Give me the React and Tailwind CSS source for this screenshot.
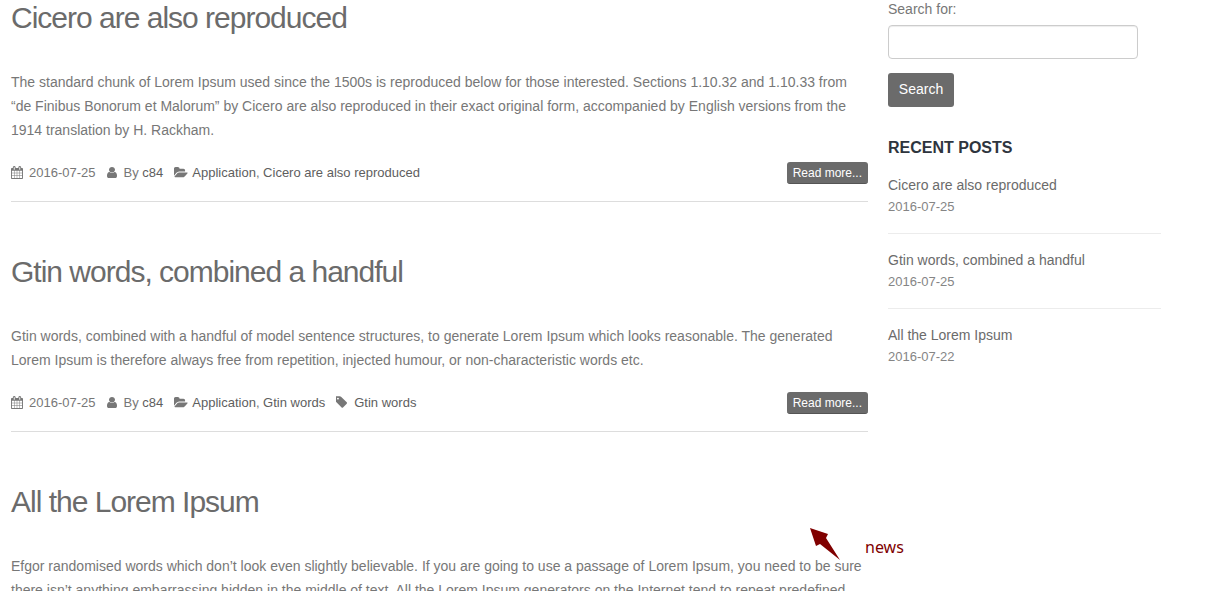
import React from 'react';

const POSTS = [
  {
    title: 'Cicero are also reproduced',
    excerpt:
      'The standard chunk of Lorem Ipsum used since the 1500s is reproduced below for those interested. Sections 1.10.32 and 1.10.33 from “de Finibus Bonorum et Malorum” by Cicero are also reproduced in their exact original form, accompanied by English versions from the 1914 translation by H. Rackham.',
    date: '2016-07-25',
    author: 'c84',
    categories: ['Application', 'Cicero are also reproduced'],
    tags: [],
  },
  {
    title: 'Gtin words, combined a handful',
    excerpt:
      'Gtin words, combined with a handful of model sentence structures, to generate Lorem Ipsum which looks reasonable. The generated Lorem Ipsum is therefore always free from repetition, injected humour, or non-characteristic words etc.',
    date: '2016-07-25',
    author: 'c84',
    categories: ['Application', 'Gtin words'],
    tags: ['Gtin words'],
  },
  {
    title: 'All the Lorem Ipsum',
    excerpt:
      'Efgor randomised words which don’t look even slightly believable. If you are going to use a passage of Lorem Ipsum, you need to be sure there isn’t anything embarrassing hidden in the middle of text. All the Lorem Ipsum generators on the Internet tend to repeat predefined',
    date: '2016-07-22',
    author: 'c84',
    categories: ['Application'],
    tags: [],
  },
];

function CalendarIcon() {
  return (
    <svg viewBox="64 0 1664 1792" className="w-3 h-[13px] mb-[2px] shrink-0" fill="currentColor" aria-hidden="true">
      <path d="M192 1664h288v-288h-288v288zM544 1664h320v-288h-320v288zM192 1312h288v-320h-288v320zM544 1312h320v-320h-320v320zM192 928h288v-288h-288v288zM928 1664h320v-288h-320v288zM544 928h320v-288h-320v288zM1312 1664h288v-288h-288v288zM928 1312h320v-320h-320v320zM576 480v-288q0-13-9.5-22.5t-22.5-9.5h-64q-13 0-22.5 9.5t-9.5 22.5v288q0 13 9.5 22.5t22.5 9.5h64q13 0 22.5-9.5t9.5-22.5zM1312 1312h288v-320h-288v320zM928 928h320v-288h-320v288zM1312 928h288v-288h-288v288zM1344 480v-288q0-13-9.5-22.5t-22.5-9.5h-64q-13 0-22.5 9.5t-9.5 22.5v288q0 13 9.5 22.5t22.5 9.5h64q13 0 22.5-9.5t9.5-22.5zM1728 384v1280q0 52-38 90t-90 38h-1408q-52 0-90-38t-38-90v-1280q0-52 38-90t90-38h128v-96q0-66 47-113t113-47h64q66 0 113 47t47 113v96h384v-96q0-66 47-113t113-47h64q66 0 113 47t47 113v96h128q52 0 90 38t38 90z" />
    </svg>
  );
}

function UserIcon() {
  return (
    <svg viewBox="256 128 1280 1536" preserveAspectRatio="none" className="w-[10px] h-[11px] mb-[2px] shrink-0" fill="currentColor" aria-hidden="true">
      <path d="M1536 1399q0 109-62.5 187t-150.5 78h-854q-88 0-150.5-78t-62.5-187q0-85 8.5-160.5t31.5-152 58.5-131 94-89 134.5-34.5q131 128 313 128t313-128q76 0 134.5 34.5t94 89 58.5 131 31.5 152 8.5 160.5zm-256-887q0 159-112.5 271.5t-271.5 112.5-271.5-112.5-112.5-271.5 112.5-271.5 271.5-112.5 271.5 112.5 112.5 271.5z" />
    </svg>
  );
}

function FolderIcon() {
  return (
    <svg viewBox="0 0 1815 1792" className="w-[14px] h-[13px] mb-[2px] shrink-0" fill="currentColor" aria-hidden="true">
      <path d="M1815 952q0 31-31 66l-336 396q-43 51-120.5 86.5t-143.5 35.5h-1088q-34 0-60.5-13t-26.5-43q0-31 31-66l336-396q43-51 120.5-86.5t143.5-35.5h1088q34 0 60.5 13t26.5 43zm-343-344v160h-832q-94 0-197 47.5t-164 119.5l-337 396-5 6q0-4-.5-12.5t-.5-12.5v-960q0-92 66-158t158-66h320q92 0 158 66t66 158v32h544q92 0 158 66t66 158z" />
    </svg>
  );
}

function TagIcon() {
  return (
    <svg viewBox="192 128 1451 1664" className="w-[11px] h-[13px] mb-[2px] shrink-0" fill="currentColor" aria-hidden="true">
      <path d="M576 448q0-53-37.5-90.5t-90.5-37.5-90.5 37.5-37.5 90.5 37.5 90.5 90.5 37.5 90.5-37.5 37.5-90.5zm1067 576q0 53-37 90l-491 492q-39 37-91 37-53 0-90-37l-715-716q-38-37-64.5-101t-26.5-117v-416q0-52 38-90t90-38h416q53 0 117 26.5t102 64.5l715 714q37 39 37 91z" />
    </svg>
  );
}

function LinkList({ items }) {
  return (
    <span>
      {items.map((item, i) => (
        <React.Fragment key={item}>
          {i > 0 && ', '}
          <a href="#" className="text-[#5e5e5e]">{item}</a>
        </React.Fragment>
      ))}
    </span>
  );
}

function Post({ post }) {
  return (
    <article className="border-b border-[#dddddd] pb-[17px] mb-[52px]">
      <h2 className="text-[30px] leading-9 tracking-[-1px] mb-[34px] text-[#6b6b6b]">
        <a href="#">{post.title}</a>
      </h2>
      <p className="text-sm leading-6 mb-5">{post.excerpt}</p>
      <div className="flex items-center justify-between text-[13px] leading-5">
        <div className="flex items-center gap-[11px]">
          <span className="flex items-center gap-[6px]"><CalendarIcon /> {post.date}</span>
          <span className="flex items-center gap-[7px]">
            <UserIcon />
            <span>By <a href="#" className="text-[#5e5e5e]">{post.author}</a></span>
          </span>
          <span className="flex items-center gap-1"><FolderIcon /> <LinkList items={post.categories} /></span>
          {post.tags.length > 0 && (
            <span className="flex items-center gap-[7px]"><TagIcon /> <LinkList items={post.tags} /></span>
          )}
        </div>
        <a
          href="#"
          className="h-[22px] px-[6px] rounded-[3px] bg-[#6b6b6b] border-b border-[#555555] text-white text-xs leading-[22px]"
        >
          Read more...
        </a>
      </div>
    </article>
  );
}

function Sidebar() {
  return (
    <aside className="w-[273px] shrink-0">
      <form onSubmit={(e) => e.preventDefault()}>
        <label htmlFor="search" className="block text-sm leading-[18px] mb-[7px]">Search for:</label>
        <input
          id="search"
          type="text"
          className="block w-[250px] h-[34px] px-3 border border-[#cccccc] rounded-[4px] shadow-[inset_0_1px_1px_rgba(0,0,0,0.075)] text-sm outline-none"
        />
        <button
          type="submit"
          className="block mt-[14px] h-[34px] w-[66px] pb-[2px] rounded-[3px] bg-[#6b6b6b] text-white text-sm"
        >
          Search
        </button>
      </form>

      <h3 className="mt-[29px] mb-[15px] text-base leading-6 font-bold uppercase text-[#2e353e]">Recent Posts</h3>
      <ul className="text-sm leading-[21px]">
        {POSTS.map((post) => (
          <li key={post.title} className="pb-4 mb-4 border-b border-[#ececec] last:border-b-0">
            <a href="#" className="block text-[#6b6b6b]">{post.title}</a>
            <time className="block text-[13px] leading-[21px] text-[#858585]">{post.date}</time>
          </li>
        ))}
      </ul>
    </aside>
  );
}

export default function App() {
  return (
    <div className="relative h-screen overflow-hidden bg-white text-[#777777] font-['Liberation_Sans',Arial,sans-serif]">
      <div className="flex gap-5 pl-[11px] pr-14">
        <main className="flex-1 min-w-0">
          {POSTS.map((post) => (
            <Post key={post.title} post={post} />
          ))}
        </main>
        <Sidebar />
      </div>

      {/* Callout over the post list */}
      <div className="absolute left-[810px] top-[528px] flex gap-[25px] text-[#800000]">
        <svg viewBox="0 0 30 32" className="w-[30px] h-8" fill="currentColor" aria-hidden="true">
          <path d="M0 0L18 6L16 10L30 32L10 16L6 18Z" />
        </svg>
        <span className="pt-[7px] text-base leading-6 font-['Noto_Sans',sans-serif]">news</span>
      </div>
    </div>
  );
}
